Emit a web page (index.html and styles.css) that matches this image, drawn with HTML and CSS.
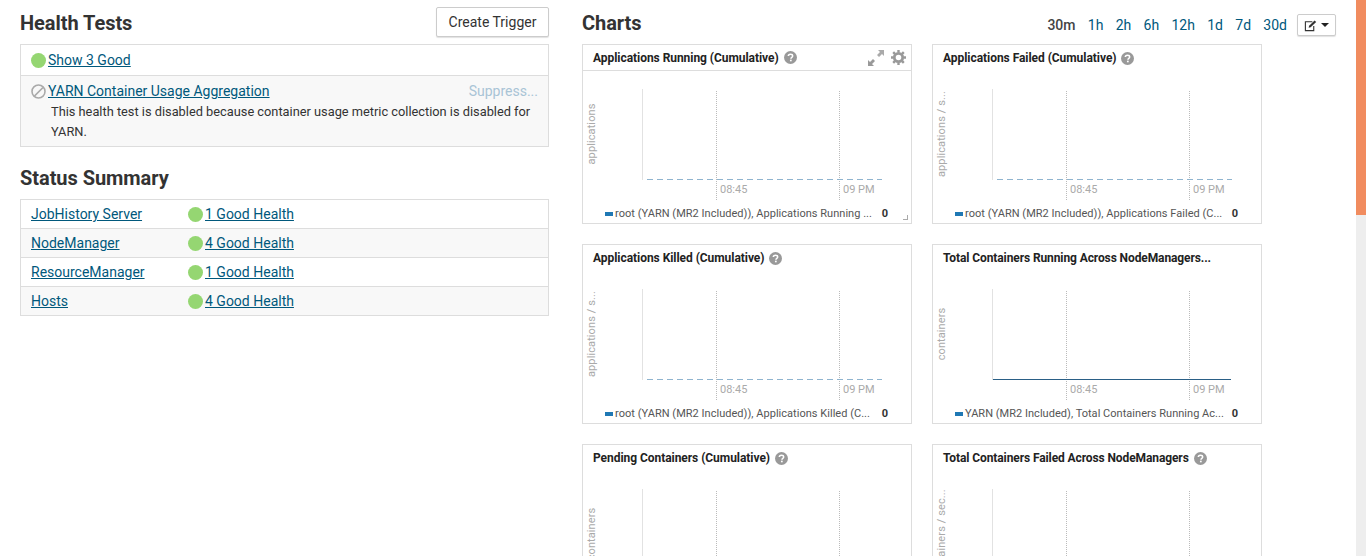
FILE: index.html
```html
<!DOCTYPE html>
<html lang="en">
<head>
    <meta charset="UTF-8">
    <meta name="viewport" content="width=device-width, initial-scale=1.0">
    <title>YARN Status</title>
    <link rel="stylesheet" href="styles.css">
</head>
<body>

<svg class="defs" width="0" height="0">
    <symbol id="help" viewBox="0 0 12 12">
        <circle cx="6" cy="6" r="6" fill="#999"/>
        <path d="M4 4.7C4 3.5 4.9 3 6 3s2 .6 2 1.6c0 1.4-1.6 1.3-1.6 2.6" fill="none" stroke="#fff" stroke-width="1.4"/>
        <rect x="5.5" y="8" width="1.6" height="1.5" fill="#fff"/>
    </symbol>
</svg>

<div class="page">
    <div class="main">
        <!-- Left column -->
        <div class="left">
            <div class="head-row">
                <h2>Health Tests</h2>
                <button type="button" class="btn">Create Trigger</button>
            </div>
            <div class="box">
                <div class="test-row">
                    <span class="dot"></span><a href="#">Show 3 Good</a>
                </div>
                <div class="test-row shaded">
                    <div class="test-title">
                        <svg class="off-icon" width="15" height="15" viewBox="0 0 15 15">
                            <circle cx="7.5" cy="7.5" r="6.5" fill="none" stroke="#aaa" stroke-width="1.6"/>
                            <path d="M3.5 12L12 3.5" stroke="#aaa" stroke-width="1.7"/>
                        </svg>
                        <a href="#">YARN Container Usage Aggregation</a>
                        <span class="suppress">Suppress...</span>
                    </div>
                    <p>This health test is disabled because container usage metric collection is disabled for YARN.</p>
                </div>
            </div>

            <h2 class="status-title">Status Summary</h2>
            <div class="box">
                <div class="status-row"><a class="status-name" href="#">JobHistory Server</a><span class="dot"></span><a href="#">1 Good Health</a></div>
                <div class="status-row shaded"><a class="status-name" href="#">NodeManager</a><span class="dot"></span><a href="#">4 Good Health</a></div>
                <div class="status-row"><a class="status-name" href="#">ResourceManager</a><span class="dot"></span><a href="#">1 Good Health</a></div>
                <div class="status-row shaded"><a class="status-name" href="#">Hosts</a><span class="dot"></span><a href="#">4 Good Health</a></div>
            </div>
        </div>

        <!-- Charts -->
        <div class="right">
            <div class="head-row charts-head">
                <h2>Charts</h2>
                <div class="ranges">
                    <span class="current">30m</span>
                    <a href="#">1h</a><a href="#">2h</a><a href="#">6h</a><a href="#">12h</a><a href="#">1d</a><a href="#">7d</a><a href="#">30d</a>
                    <button type="button" class="btn btn-small">
                        <svg width="14" height="13" viewBox="0 0 14 13">
                            <path d="M9 2.5H1.5v9.5h9V7" fill="none" stroke="#333" stroke-width="1.2"/>
                            <path d="M5 9l.5-2.2L11.4 1l1.7 1.7-5.9 5.8z" fill="#333"/>
                        </svg>
                        <span class="caret"></span>
                    </button>
                </div>
            </div>
            <div class="chart-grid" id="charts"></div>
        </div>
    </div>
    <div class="scrollbar"><div class="thumb"></div></div>
</div>

<script src="charts.js"></script>
</body>
</html>
```

FILE: styles.css
```css
* {
    box-sizing: border-box;
}
html, body {
    height: 100%;
    margin: 0;
    overflow: hidden;
}
body {
    font-family: Roboto, "Liberation Sans", sans-serif;
    font-size: 14px;
    line-height: 20px;
    color: #333;
    background: #fff;
}
a {
    color: #00587c;
    text-decoration: underline;
}
h2 {
    margin: 0;
    font-size: 20px;
    font-weight: 700;
    letter-spacing: -.05px;
    line-height: 24px;
    color: #333;
}
.defs {
    position: absolute;
}
.page {
    display: flex;
    height: 556px;
}
.main {
    flex: 1;
    display: flex;
    padding: 7px 0 0 20px;
    gap: 33px;
    min-width: 0;
}
.left {
    width: 529px;
    flex: none;
}
.right {
    flex: 1;
    min-width: 0;
}
.scrollbar {
    width: 10px;
    flex: none;
    background: #eee;
}
.thumb {
    height: 215px;
    background: #f18c5f;
}
.head-row {
    display: flex;
    justify-content: space-between;
    align-items: center;
    height: 30px;
    margin-bottom: 7px;
}
.head-row h2 {
    padding-top: 2px;
}
.btn {
    width: 113px;
    height: 30px;
    padding: 0;
    font: inherit;
    color: #333;
    background: #fff;
    border: 1px solid #ccc;
    border-radius: 2px;
    box-shadow: 0 1px 1px rgba(0, 0, 0, .12);
    cursor: pointer;
}
.box {
    border: 1px solid #ddd;
}
.shaded {
    background: #f8f8f8;
}
.dot {
    display: inline-block;
    flex: none;
    width: 15px;
    height: 15px;
    margin-right: 2px;
    border-radius: 50%;
    background: #95d672;
}
.test-row {
    display: flex;
    align-items: center;
    padding: 5px 10px;
    height: 30px;
}
.test-row.shaded {
    display: block;
    height: auto;
    padding: 5px 10px 4px;
    border-top: 1px solid #ddd;
}
.test-title {
    display: flex;
    align-items: center;
    height: 20px;
}
.off-icon {
    margin-right: 2px;
    flex: none;
}
.suppress {
    margin-left: auto;
    color: #a9c4d6;
}
.test-row p {
    margin: 1px 0 0 20px;
    font-size: 12.8px;
    line-height: 20px;
}
.status-title {
    margin: 19px 0 9px;
}
.status-row {
    display: flex;
    align-items: center;
    height: 28px;
    padding-left: 10px;
}
.status-row + .status-row {
    height: 29px;
    border-top: 1px solid #ddd;
}
.status-name {
    width: 157px;
}
.charts-head {
    width: 754px;
}
.ranges {
    display: flex;
    align-items: center;
    align-self: flex-start;
    gap: 12.3px;
    margin-top: 7px;
}
.ranges a {
    text-decoration: none;
}
.ranges .current {
    font-weight: 500;
    color: #444;
}
.btn-small {
    display: flex;
    align-items: center;
    gap: 4px;
    width: 39px;
    height: 22px;
    margin-left: -2.3px;
    padding: 0 6px;
}
.caret {
    width: 0;
    height: 0;
    border-left: 4px solid transparent;
    border-right: 4px solid transparent;
    border-top: 4px solid #222;
}
.chart-grid {
    display: grid;
    grid-template-columns: 330px 330px;
    grid-auto-rows: 180px;
    gap: 20px;
}
.chart {
    position: relative;
    display: flex;
    flex-direction: column;
    border: 1px solid #ddd;
    background: #fff;
}
.chart-head {
    display: flex;
    align-items: center;
    flex: none;
    height: 26px;
    padding-left: 10px;
    font-size: 12px;
    font-weight: 700;
    letter-spacing: -.05px;
    color: #222;
}
.chart-head.active {
    border-bottom: 1px solid #ddd;
}
.chart-head.tight {
    letter-spacing: -.1px;
}
.help {
    margin-left: 5px;
    width: 13px;
    height: 13px;
}
.tools {
    display: flex;
    align-items: center;
    gap: 7px;
    margin-left: auto;
    margin-right: 5px;
}
.plot {
    display: block;
    flex: none;
    width: 328px;
    height: 132px;
}
.plot-axis {
    stroke: #e2e2e2;
}
.plot-grid {
    stroke: #bbb;
    stroke-dasharray: 1 1;
}
.plot-zero {
    stroke: #8fb4cf;
    stroke-dasharray: 6 4;
}
.plot-zero.solid {
    stroke: #2a5f86;
    stroke-dasharray: none;
}
.plot-text {
    font-family: Roboto, "Liberation Sans", sans-serif;
    font-size: 11px;
    fill: #aaa;
}
.plot-ylabel {
    text-anchor: middle;
    letter-spacing: .1px;
}
.legend {
    display: flex;
    align-items: center;
    height: 20px;
    padding: 2px 23px 0 22px;
    font-size: 11px;
    letter-spacing: .03px;
    color: #555;
    white-space: nowrap;
}
.swatch {
    flex: none;
    width: 8px;
    height: 4px;
    margin-right: 2px;
    background: #1f78b4;
}
.legend b {
    margin-left: auto;
    color: #333;
}
.resize {
    position: absolute;
    right: 3px;
    bottom: 3px;
    width: 5px;
    height: 5px;
    border-right: 1px solid #aaa;
    border-bottom: 1px solid #aaa;
}
```

FILE: charts.js
```js
// Chart cards, all drawn from the same plot template
const charts = [
    { title: 'Applications Running (Cumulative)', help: true, active: true, ylabel: 'applications', legend: 'root (YARN (MR2 Included)), Applications Running ...' },
    { title: 'Applications Failed (Cumulative)', help: true, ylabel: 'applications / s...', legend: 'root (YARN (MR2 Included)), Applications Failed (C...' },
    { title: 'Applications Killed (Cumulative)', help: true, ylabel: 'applications / s...', legend: 'root (YARN (MR2 Included)), Applications Killed (C...' },
    { title: 'Total Containers Running Across NodeManagers...', tight: true, ylabel: 'containers', solid: true, legend: 'YARN (MR2 Included), Total Containers Running Ac...' },
    { title: 'Pending Containers (Cumulative)', help: true, ylabel: 'containers', legend: 'root (YARN (MR2 Included)), Pending Containers' },
    { title: 'Total Containers Failed Across NodeManagers', help: true, tight: true, ylabel: 'containers / sec...', legend: 'YARN (MR2 Included), Total Containers Failed' }
];

function plotSvg(c) {
    return `
        <svg class="plot" viewBox="0 0 328 132">
            <line class="plot-axis" x1="59.5" y1="18" x2="59.5" y2="109"/>
            <line class="plot-grid" x1="133.5" y1="20" x2="133.5" y2="129"/>
            <line class="plot-grid" x1="256.5" y1="20" x2="256.5" y2="129"/>
            <line class="plot-zero${c.solid ? ' solid' : ''}" x1="${c.solid ? 60 : 64}" y1="108.5" x2="${c.solid ? 298 : 299}" y2="108.5"/>
            <text class="plot-text" x="137" y="122">08:45</text>
            <text class="plot-text" x="260" y="122">09 PM</text>
            <text class="plot-text plot-ylabel" transform="translate(12 63) rotate(-90)">${c.ylabel}</text>
        </svg>`;
}

const tools = `
    <span class="tools">
        <svg width="16" height="16" viewBox="0 0 16 16" fill="#aaa">
            <path d="M16 0v6l-2-2-3 3-2-2 3-3-2-2z"/>
            <path d="M0 16v-6l2 2 3-3 2 2-3 3 2 2z" fill="#999"/>
        </svg>
        <svg width="15" height="15" viewBox="0 0 15 15">
            <circle cx="7.5" cy="7.5" r="4.2" fill="none" stroke="#999" stroke-width="2.8"/>
            <path d="M7.5 0v15M0 7.5h15M2.2 2.2l10.6 10.6M12.8 2.2L2.2 12.8" stroke="#999" stroke-width="2.4" stroke-dasharray="2.4 10.2"/>
        </svg>
    </span>`;

document.getElementById('charts').innerHTML = charts.map(c => `
    <div class="chart">
        <div class="chart-head${c.active ? ' active' : ''}${c.tight ? ' tight' : ''}">
            <span>${c.title}</span>
            ${c.help ? '<svg class="help"><use href="#help"/></svg>' : ''}
            ${c.active ? tools : ''}
        </div>
        ${plotSvg(c)}
        <div class="legend"><span class="swatch"></span><span>${c.legend}</span><b>0</b></div>
        ${c.active ? '<span class="resize"></span>' : ''}
    </div>`).join('');
```
